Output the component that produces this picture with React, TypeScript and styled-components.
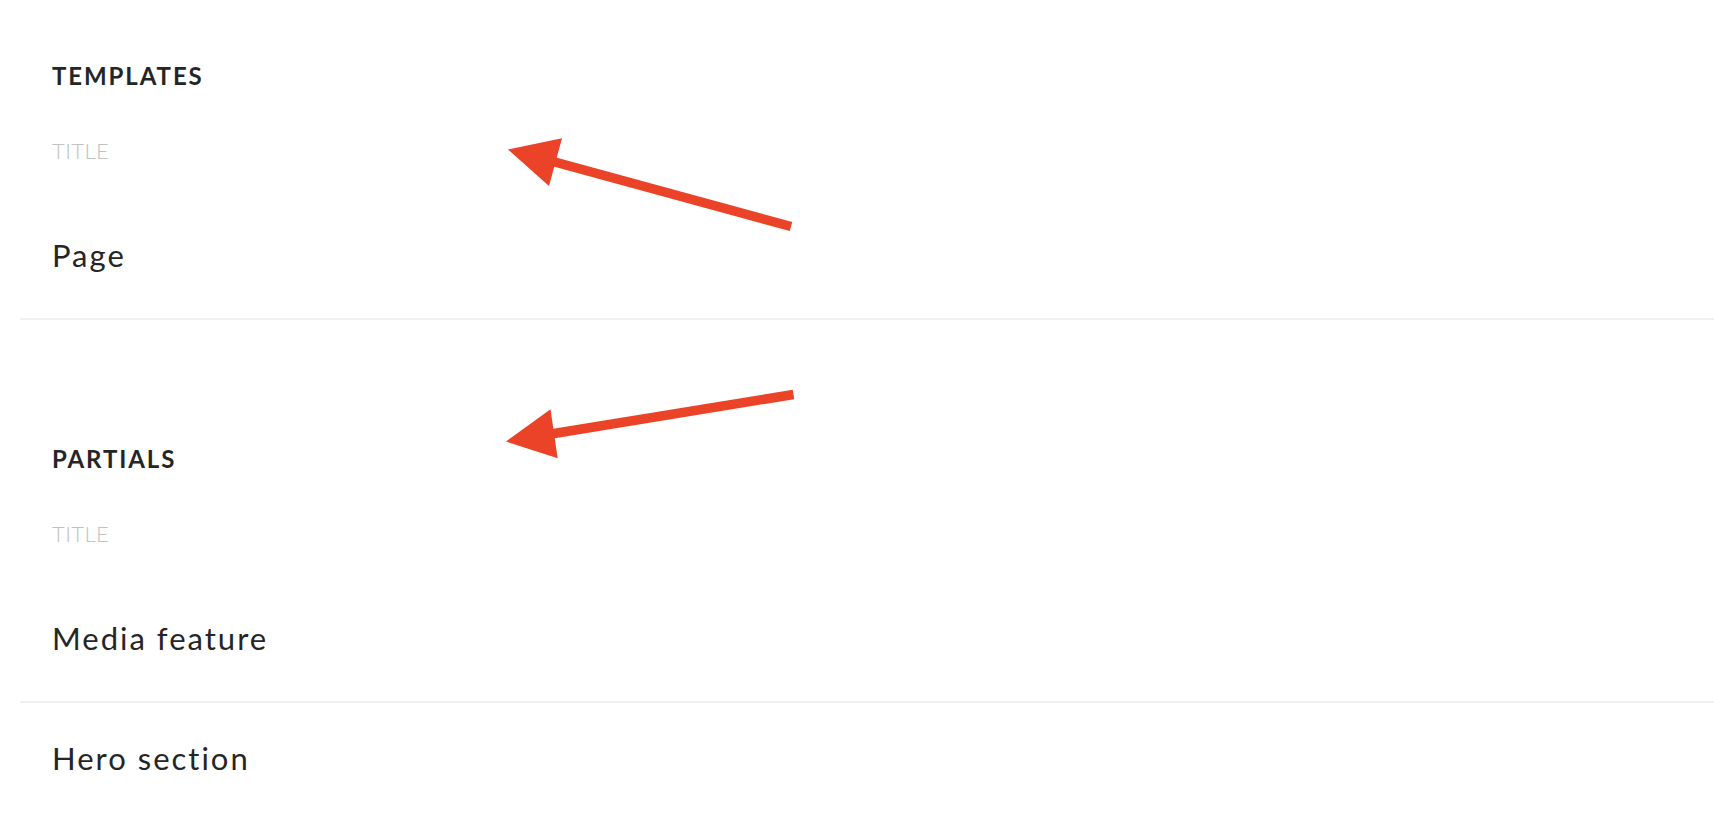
import React from "react";
import styled, { createGlobalStyle } from "styled-components";

const GlobalStyle = createGlobalStyle`
  html, body {
    margin: 0;
    padding: 0;
    background: #ffffff;
  }
  body {
    font-family: Lato, "Noto Sans", sans-serif;
    color: #252525;
  }
  * { box-sizing: border-box; }
`;

const Page = styled.div`
  position: relative;
  width: 1714px;
  height: 820px;
  overflow: hidden;
  padding-left: 20px;
  background: #ffffff;
`;

const Section = styled.section<{ $top: number }>`
  display: flex;
  flex-direction: column;
  padding-top: ${(p) => p.$top}px;
`;

const Heading = styled.h2`
  margin: 0;
  padding-left: 32px;
  font-family: Lato, "Noto Sans", sans-serif;
  font-weight: 700;
  font-size: 24px;
  line-height: 24px;
  letter-spacing: 1.9px;
  text-transform: uppercase;
  color: #252525;
`;

const ColumnLabel = styled.div`
  margin-top: 52px;
  padding-left: 32px;
  font-family: Lato, "Noto Sans", sans-serif;
  font-weight: 300;
  font-size: 22px;
  line-height: 22px;
  letter-spacing: 0.4px;
  text-transform: uppercase;
  color: #c2c2c2;
`;

const List = styled.ul`
  list-style: none;
  margin: 38px 0 0 0;
  padding: 0;
  display: flex;
  flex-direction: column;
`;

const Row = styled.li`
  height: 120px;
  padding: 37px 32px 0 32px;
  border-bottom: 2px solid #f0f0f0;
  font-family: Lato, "Noto Sans", sans-serif;
  font-weight: 400;
  font-size: 31px;
  line-height: 36px;
  letter-spacing: 2px;
  color: #252525;
`;

const Overlay = styled.svg`
  position: absolute;
  left: 0;
  top: 0;
  pointer-events: none;
`;

const ARROW = "#ea4327";

const Arrow: React.FC<{
  tail: [number, number];
  base: [number, number];
  head: [number, number][];
}> = ({ tail, base, head }) => (
  <g>
    <line
      x1={tail[0]}
      y1={tail[1]}
      x2={base[0]}
      y2={base[1]}
      stroke={ARROW}
      strokeWidth={9.5}
      strokeLinecap="butt"
    />
    <polygon points={head.map((p) => p.join(",")).join(" ")} fill={ARROW} />
  </g>
);

export default function App() {
  return (
    <>
      <GlobalStyle />
      <Page>
        <Section $top={64}>
          <Heading>Templates</Heading>
          <ColumnLabel>Title</ColumnLabel>
          <List>
            <Row>Page</Row>
          </List>
        </Section>
        <Section $top={127}>
          <Heading>Partials</Heading>
          <ColumnLabel>Title</ColumnLabel>
          <List>
            <Row>Media feature</Row>
            <Row>Hero section</Row>
          </List>
        </Section>
        <Overlay width={1714} height={820} viewBox="0 0 1714 820">
          <Arrow
            tail={[791, 226.5]}
            base={[553, 161.5]}
            head={[
              [508, 149.5],
              [562, 138.3],
              [549, 186],
            ]}
          />
          <Arrow
            tail={[793.5, 394.5]}
            base={[551, 434]}
            head={[
              [506, 441.5],
              [550.5, 409.3],
              [557.7, 458.3],
            ]}
          />
        </Overlay>
      </Page>
    </>
  );
}
